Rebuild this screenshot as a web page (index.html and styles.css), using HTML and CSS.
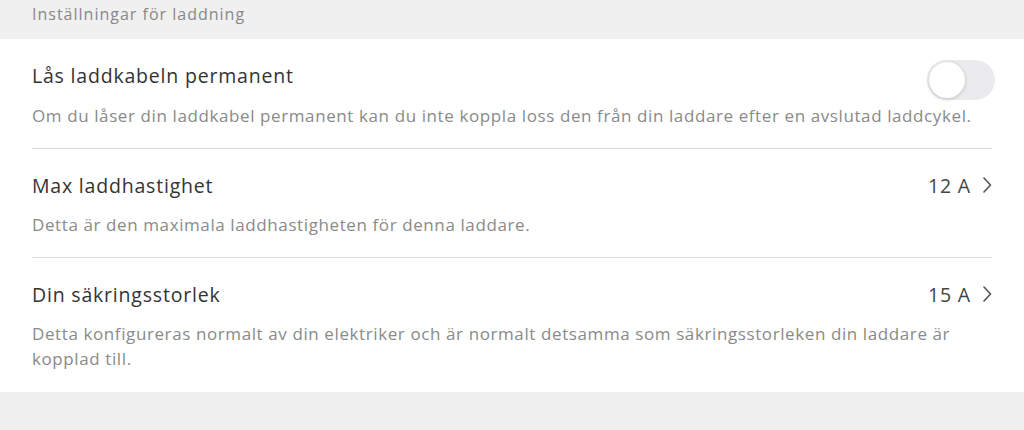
FILE: index.html
```html
<!DOCTYPE html>
<html lang="sv">

<head>
    <meta charset="UTF-8">
    <meta name="viewport" content="width=device-width, initial-scale=1.0">
    <title>Inställningar för laddning</title>
    <link rel="stylesheet" href="styles.css">
</head>

<body>
    <div class="section-header">Inställningar för laddning</div>

    <div class="card">
        <div class="setting">
            <div class="setting-top">
                <span class="setting-title">Lås laddkabeln permanent</span>
                <span class="toggle"><span class="knob"></span></span>
            </div>
            <p class="setting-desc first-desc">Om du låser din laddkabel permanent kan du inte koppla loss den från din laddare efter en avslutad laddcykel.</p>
        </div>

        <div class="setting">
            <div class="setting-top">
                <span class="setting-title">Max laddhastighet</span>
                <span class="setting-value">12 A
                    <svg class="chevron" width="10" height="16" viewBox="0 0 10 16"><path d="M2 1 L8.5 8 L2 15" fill="none" stroke="#555" stroke-width="1.6" stroke-linecap="round" stroke-linejoin="round"/></svg>
                </span>
            </div>
            <p class="setting-desc">Detta är den maximala laddhastigheten för denna laddare.</p>
        </div>

        <div class="setting">
            <div class="setting-top">
                <span class="setting-title">Din säkringsstorlek</span>
                <span class="setting-value">15 A
                    <svg class="chevron" width="10" height="16" viewBox="0 0 10 16"><path d="M2 1 L8.5 8 L2 15" fill="none" stroke="#555" stroke-width="1.6" stroke-linecap="round" stroke-linejoin="round"/></svg>
                </span>
            </div>
            <p class="setting-desc">Detta konfigureras normalt av din elektriker och är normalt detsamma som säkringsstorleken din laddare är kopplad till.</p>
        </div>
    </div>
</body>

</html>
```

FILE: styles.css
```css
body {
    margin: 0;
    background-color: #f0f0f0;
    font-family: "Open Sans", "Lato", sans-serif;
    color: #333;
}

.section-header {
    height: 39px;
    padding: 3px 32px 0;
    box-sizing: border-box;
    font-size: 16px;
    letter-spacing: 1px;
    color: #888;
}

.card {
    background-color: #fff;
    padding: 0 32px;
    box-shadow: 0 2px 4px rgba(0, 0, 0, 0.06);
}

.setting {
    border-bottom: 1px solid #dcdcdc;
    padding: 22px 0 20px;
}

.setting:last-child {
    border-bottom: none;
    padding-bottom: 21px;
}

.setting-top {
    display: flex;
    justify-content: space-between;
    align-items: center;
    height: 28px;
}

.setting-title {
    font-size: 19.5px;
    letter-spacing: 0.8px;
    color: #333;
}

.setting-value {
    display: flex;
    align-items: center;
    gap: 11px;
    font-size: 19.5px;
    letter-spacing: 0.8px;
    color: #444;
}

.setting-desc {
    margin: 13px 0 0;
    font-size: 17px;
    line-height: 25px;
    letter-spacing: 0.6px;
    color: #8a8a8a;
}

.first-desc {
    margin-top: 14px;
}

.toggle {
    position: relative;
    width: 68px;
    height: 40px;
    margin-top: 5px;
    margin-right: -3px;
    margin-bottom: -5px;
    border-radius: 20px;
    background-color: #ebebed;
}

.knob {
    position: absolute;
    top: 2px;
    left: 2px;
    width: 36px;
    height: 36px;
    border-radius: 50%;
    background-color: #fff;
    box-shadow: 0 1px 4px rgba(0, 0, 0, 0.18);
}
```
